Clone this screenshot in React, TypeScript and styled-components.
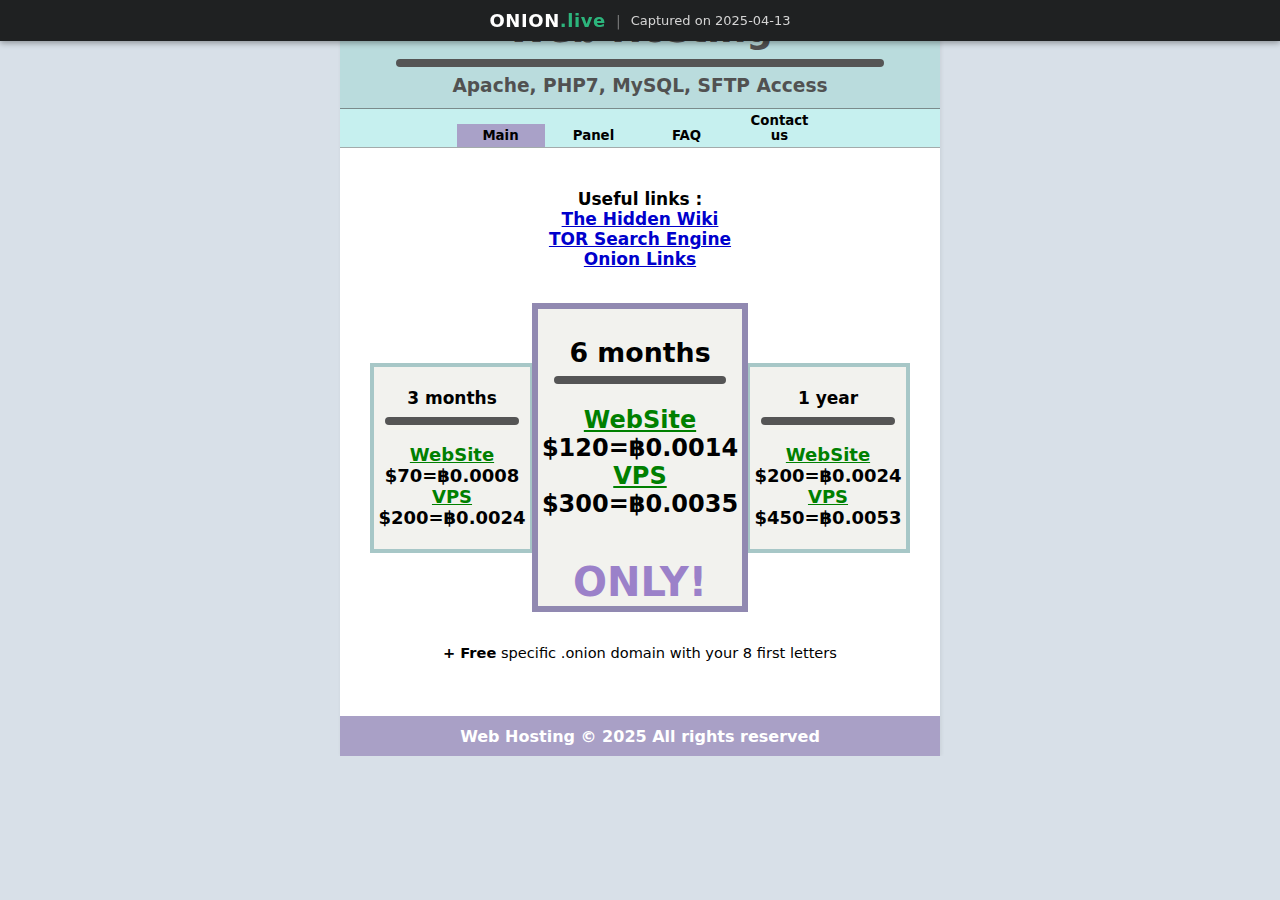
import React from "react";
import styled, { createGlobalStyle } from "styled-components";

const Global = createGlobalStyle`
  html, body {
    margin: 0;
    padding: 0;
    background: #d8e0e8;
    font-family: "DejaVu Sans", Verdana, sans-serif;
  }
`;

const TopBar = styled.div`
  position: fixed;
  top: 0;
  left: 0;
  right: 0;
  height: 41px;
  background: #1f2122;
  box-shadow: 0 2px 6px rgba(0, 0, 0, 0.35);
  display: flex;
  align-items: center;
  justify-content: center;
  z-index: 10;
  .brand {
    font-size: 18px;
    font-weight: bold;
    letter-spacing: 0.6px;
    color: #ffffff;
  }
  .brand span {
    color: #2cb57c;
  }
  .sep {
    color: #777;
    font-size: 14px;
    margin: 0 10px;
  }
  .date {
    color: #d4d4d4;
    font-size: 13px;
  }
`;

const Page = styled.div`
  width: 600px;
  margin: 0 auto;
  background: #ffffff;
  box-shadow: 1px 0 4px rgba(0, 0, 0, 0.08);
`;

const Header = styled.header`
  background: #badcdd;
  padding: 8px 0 10px;
  border-bottom: 1px solid #7b8b8b;
  text-align: center;
  color: #515151;
  h1 {
    margin: 0;
    font-size: 37px;
    line-height: 43px;
  }
  h2 {
    margin: 7px 0 0;
    font-size: 18.6px;
    line-height: 24px;
  }
`;

const Bar = styled.div<{ $w: number }>`
  width: ${(p) => p.$w}px;
  height: 8px;
  border-radius: 4px;
  background: #555555;
  margin: 8px auto 0;
`;

const Nav = styled.nav`
  background: #c6f0ef;
  height: 38px;
  border-bottom: 1px solid #a3abab;
  display: flex;
  justify-content: center;
  align-items: flex-end;
  gap: 5px;
`;

const NavItem = styled.a<{ $active?: boolean }>`
  width: 88px;
  padding: 4px 0;
  font-size: 13.3px;
  line-height: 15px;
  font-weight: bold;
  text-align: center;
  color: #000;
  background: ${(p) => (p.$active ? "#a9a1c8" : "transparent")};
`;

const Content = styled.main`
  padding: 41px 30px 54px;
  text-align: center;
`;

const Links = styled.div`
  font-size: 17px;
  line-height: 20px;
  font-weight: bold;
  a {
    display: block;
    color: #0000cc;
    text-decoration: underline;
  }
`;

const Plans = styled.div`
  margin-top: 34px;
  display: flex;
  align-items: center;
`;

const Card = styled.div<{ $big?: boolean }>`
  box-sizing: border-box;
  width: ${(p) => (p.$big ? 216 : 164)}px;
  margin: ${(p) => (p.$big ? "0 -2px" : "0")};
  position: relative;
  z-index: ${(p) => (p.$big ? 1 : 0)};
  background: #f2f2ee;
  border: ${(p) => (p.$big ? "6px solid #9189b1" : "4px solid #a7c7c7")};
  padding: ${(p) => (p.$big ? "29px 0 0" : "21px 0 21px")};
  font-weight: bold;
  font-size: ${(p) => (p.$big ? 24 : 18)}px;
  line-height: ${(p) => (p.$big ? 28 : 21)}px;
  color: #000;
  h3 {
    margin: 0;
    font-size: ${(p) => (p.$big ? 26.8 : 17)}px;
    line-height: ${(p) => (p.$big ? 30 : 21)}px;
  }
  .list {
    margin-top: ${(p) => (p.$big ? 22 : 19)}px;
  }
  a {
    display: block;
    color: #008000;
    text-decoration: underline;
  }
`;

const Only = styled.div`
  margin-top: 41px;
  font-size: 40px;
  line-height: 47px;
  color: #9b81c9;
`;

const Free = styled.p`
  margin: 32px 0 0;
  font-size: 14.6px;
  line-height: 18px;
`;

const Footer = styled.footer`
  background: #a9a0c6;
  height: 40px;
  display: flex;
  align-items: center;
  justify-content: center;
  color: #ffffff;
  font-weight: bold;
  font-size: 16px;
`;

const plans = [
  { title: "3 months", web: "$70=฿0.0008", vps: "$200=฿0.0024" },
  { title: "6 months", web: "$120=฿0.0014", vps: "$300=฿0.0035", big: true },
  { title: "1 year", web: "$200=฿0.0024", vps: "$450=฿0.0053" },
];

const App = () => {
  return (
    <>
      <Global />
      <TopBar>
        <span className="brand">
          ONION<span>.live</span>
        </span>
        <span className="sep">|</span>
        <span className="date">Captured on 2025-04-13</span>
      </TopBar>
      <Page>
        <Header>
          <h1>Web Hosting</h1>
          <Bar $w={488} />
          <h2>Apache, PHP7, MySQL, SFTP Access</h2>
        </Header>
        <Nav>
          <NavItem $active>Main</NavItem>
          <NavItem>Panel</NavItem>
          <NavItem>FAQ</NavItem>
          <NavItem>
            Contact
            <br />
            us
          </NavItem>
        </Nav>
        <Content>
          <Links>
            Useful links :
            <a href="#">The Hidden Wiki</a>
            <a href="#">TOR Search Engine</a>
            <a href="#">Onion Links</a>
          </Links>
          <Plans>
            {plans.map((p) => (
              <Card key={p.title} $big={p.big}>
                <h3>{p.title}</h3>
                <Bar $w={p.big ? 172 : 134} />
                <div className="list">
                  <a href="#">WebSite</a>
                  {p.web}
                  <a href="#">VPS</a>
                  {p.vps}
                </div>
                {p.big && <Only>ONLY!</Only>}
              </Card>
            ))}
          </Plans>
          <Free>
            <b>+ Free</b> specific .onion domain with your 8 first letters
          </Free>
        </Content>
        <Footer>Web Hosting © 2025 All rights reserved</Footer>
      </Page>
    </>
  );
};

export default App;
